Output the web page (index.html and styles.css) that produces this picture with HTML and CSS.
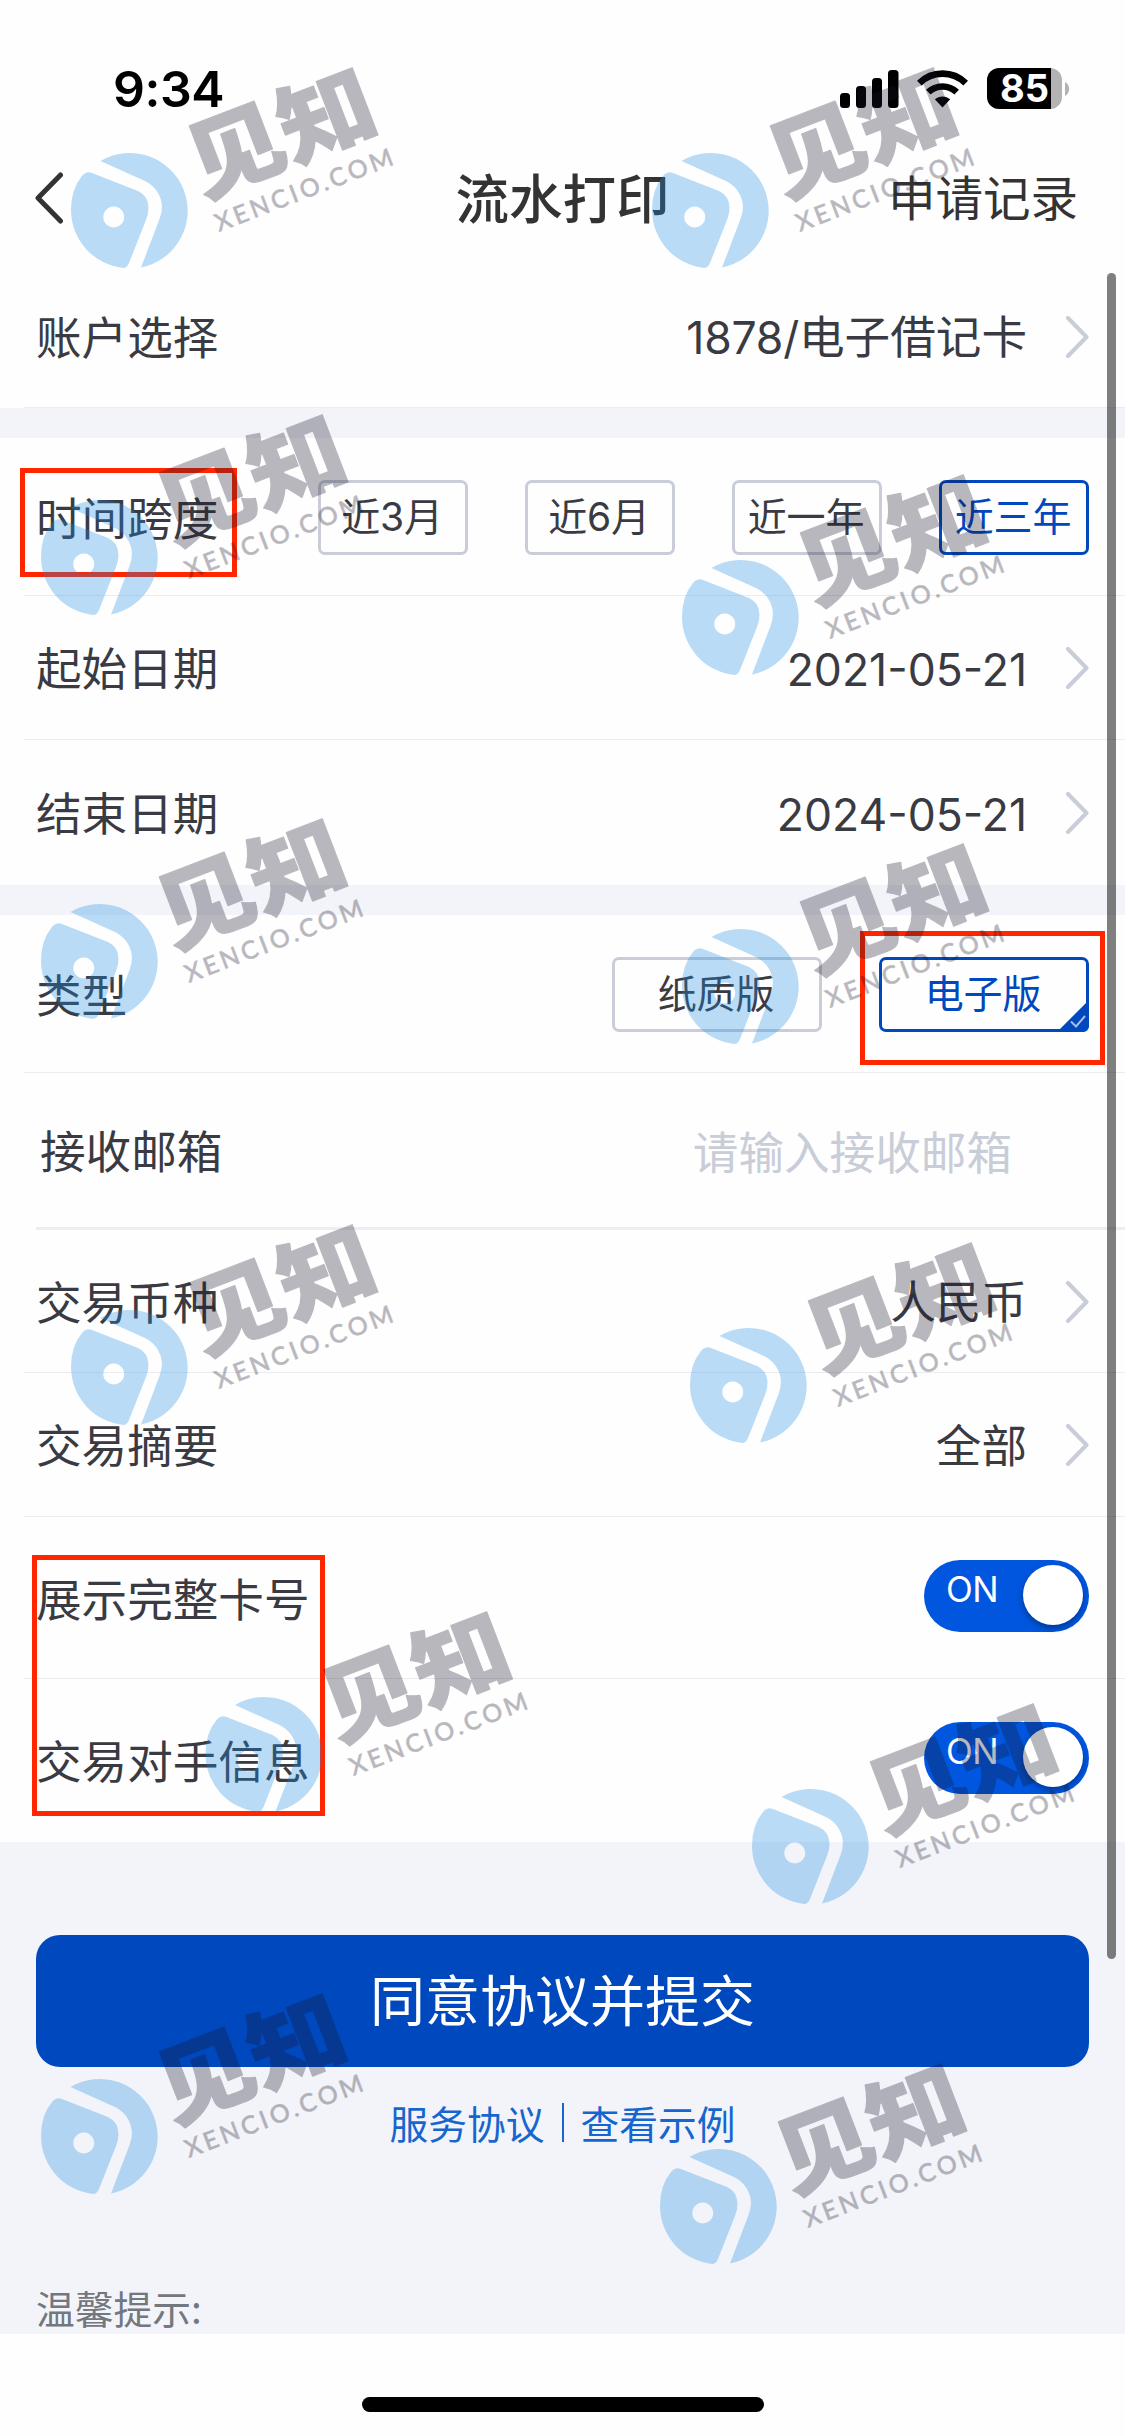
FILE: index.html
```html
<!DOCTYPE html>
<html lang="zh-CN">
<head>
<meta charset="utf-8">
<title>流水打印</title>
<link rel="stylesheet" href="styles.css">
</head>
<body>
<div class="screen">
  <header class="status">
    <span class="clock">9:34</span>
    <div class="indicators">
      <svg class="signal" width="59" height="38" viewBox="0 0 59 38"><rect x="0" y="23" width="10" height="15" rx="3.5"/><rect x="16" y="16" width="10" height="22" rx="3.5"/><rect x="32" y="8" width="10" height="30" rx="3.5"/><rect x="48" y="0" width="10.5" height="38" rx="3.5"/></svg>
      <svg class="wifi" width="51" height="38" viewBox="0 0 51 38"><g fill="none" stroke="#000" stroke-width="6.6"><path d="M2.3 13.2a33 33 0 0 1 46.4 0"/><path d="M11.3 22.2a20.5 20.5 0 0 1 28.4 0"/></g><path d="M25.5 37.5 17.8 29.3c4.400-3.900 11-3.900 15.400 0z"/></svg>
      <div class="battery"><span class="battery-text">85</span></div>
      <svg class="nub" width="5" height="14" viewBox="0 0 5 14"><path d="M0 0a8 8 0 0 1 0 14z"/></svg>
    </div>
  </header>
  <nav class="nav">
    <svg class="back" width="30" height="54" viewBox="0 0 30 54"><path d="M26.500 3 4 26 26.500 49"/></svg>
    <h1 class="title">流水打印</h1>
    <a class="records">申请记录</a>
  </nav>

  <main>
    <section>
      <div class="row"><span class="label">账户选择</span><span class="value"><span class="digits">1878/</span>电子借记卡</span><svg class="chev" viewBox="0 0 23 42"><path d="M2 2 20.500 21 2 40"/></svg></div>
    </section>
    <section class="group">
      <div class="row tall"><span class="label">时间跨度</span>
        <div class="options spans"><button class="opt">近3月</button><button class="opt">近6月</button><button class="opt">近一年</button><button class="opt on">近三年</button></div>
      </div>
      <div class="row date"><span class="label">起始日期</span><span class="value num">2021-05-21</span><svg class="chev" viewBox="0 0 23 42"><path d="M2 2 20.500 21 2 40"/></svg></div>
      <div class="row date last"><span class="label">结束日期</span><span class="value num">2024-05-21</span><svg class="chev" viewBox="0 0 23 42"><path d="M2 2 20.500 21 2 40"/></svg></div>
    </section>
    <section class="group">
      <div class="row tall"><span class="label">类型</span>
        <div class="options kinds"><button class="opt">纸质版</button><button class="opt on">电子版<svg class="corner" width="32" height="32" viewBox="0 0 32 32"><path class="tri" d="M32 0v26a6 6 0 0 1-6 6H0z"/><path class="tick" d="M14 21.500l5 5 9-10.500"/></svg></button></div>
      </div>
      <div class="row mail"><span class="label">接收邮箱</span><span class="placeholder">请输入接收邮箱</span></div>
      <div class="row"><span class="label">交易币种</span><span class="value">人民币</span><svg class="chev" viewBox="0 0 23 42"><path d="M2 2 20.500 21 2 40"/></svg></div>
      <div class="row date"><span class="label">交易摘要</span><span class="value">全部</span><svg class="chev" viewBox="0 0 23 42"><path d="M2 2 20.500 21 2 40"/></svg></div>
      <div class="row switch-row"><span class="label">展示完整卡号</span><div class="switch"><span class="switch-text">ON</span><span class="knob"></span></div></div>
      <div class="row switch-row last"><span class="label">交易对手信息</span><div class="switch"><span class="switch-text">ON</span><span class="knob"></span></div></div>
    </section>
    <section class="foot">
      <button class="submit">同意协议并提交</button>
      <div class="links"><a>服务协议</a><span class="bar"></span><a>查看示例</a></div>
      <p class="tip">温馨提示:</p>
    </section>
  </main>
  <div class="home"><span class="home-bar"></span></div>

  <span class="scroll"></span>
  <span class="mark mark-span"></span>
  <span class="mark mark-kind"></span>
  <span class="mark mark-switches"></span>

  <svg class="watermarks" width="1125" height="2436" viewBox="0 0 1125 2436">
    <defs>
      <g id="wm">
        <path class="wm-logo" fill-rule="evenodd" d="M87 172.500 Q89 172 92 173 L138 191 Q148.500 196 148.500 208 Q148.500 214 146 220 L129 263 Q127 268 123 268 A58.500 58.500 0 0 1 71 210 Q71 189 82 176 Q84 173 87 172.500Z M113.700 206.500 a10.500 10.500 0 1 0 .1 0Z"/>
        <path class="wm-logo" d="M100.500 161 A57.800 57.800 0 1 1 141 267.500 L159.500 219 Q165 205 158 193 Q154 186 146 181.500Z"/>
        <g class="wm-ink" transform="rotate(-21)">
          <text class="wm-name" transform="translate(118 257) scale(1.1 1)">见知</text>
          <text class="wm-site" x="121" y="295" textLength="189">XENCIO.COM</text>
        </g>
      </g>
    </defs>
    <use href="#wm"/>
    <use href="#wm" x="581"/>
    <use href="#wm" x="-30" y="347"/>
    <use href="#wm" x="611" y="407"/>
    <use href="#wm" x="-30" y="751"/>
    <use href="#wm" x="611" y="776"/>
    <use href="#wm" y="1157"/>
    <use href="#wm" x="619" y="1175"/>
    <use href="#wm" x="134.500" y="1544"/>
    <use href="#wm" x="681" y="1636"/>
    <use href="#wm" x="-30" y="1926"/>
    <use href="#wm" x="589" y="1996"/>
  </svg>
</div>
</body>
</html>
```
FILE: styles.css
```css
* { box-sizing: border-box; }
body { margin: 0; background: #fff; }
.screen {
  position: relative;
  width: 1125px;
  height: 2436px;
  overflow: hidden;
  background: #fefefe;
  color: #3a3b42;
  font-family: "Noto Sans CJK SC", sans-serif;
  font-size: 45.6px;
  line-height: 1;
}
h1, p { margin: 0; font-weight: 400; }
button { font: inherit; color: inherit; padding: 0; background: none; }

.status { height: 132px; display: flex; justify-content: space-between; padding: 68px 55px 0 113px; color: #000; }
.clock { font: 600 50px/42px Inter, sans-serif; letter-spacing: -0.5px; }
.indicators { display: flex; align-items: center; height: 41px; }
.wifi { margin-left: 18px; }
.battery { width: 75px; height: 41px; margin-left: 19px; border-radius: 12px; background: linear-gradient(90deg, #000 64px, #b3b3b6 64px); }
.battery-text { display: block; width: 75px; text-align: center; color: #fff; font: 700 38px/41px Inter, sans-serif; }
.nub { margin-left: 3px; fill: #b3b3b6; }

.nav { height: 133px; display: grid; grid-template-columns: 1fr auto 1fr; align-items: center; padding: 0 47px 0 34px; color: #333; }
.back { fill: none; stroke: #333; stroke-width: 5; stroke-linecap: round; stroke-linejoin: round; }
.title { font-size: 53.5px; font-weight: 500; padding: 0 0 6px 13px; }
.records { justify-self: end; padding-bottom: 5px; font-size: 47.5px; }

.row { display: flex; align-items: center; height: 143px; margin-left: 24px; padding: 1px 36px 0 12px; border-bottom: 1.5px solid #ececef; }
.row.date { height: 144px; }
.row.tall { height: 158px; padding-top: 2px; }
.row.last { border-bottom-color: transparent; }
.row.date.last { height: 145px; }
.group { border-top: 30px solid #f3f4f9; }
.label { flex: 1; padding-bottom: 2px; }
.value { padding-top: 3px; font-family: Inter, "Noto Sans CJK SC", sans-serif; }
.digits { font-size: 44.5px; letter-spacing: -0.2px; }
.num { padding-top: 5px; font-size: 44.5px; }
.chev { width: 23px; height: 42px; margin-left: 39px; fill: none; stroke: #c8cdd8; stroke-width: 4; stroke-linecap: round; stroke-linejoin: round; }

.options { display: flex; gap: 57px; }
.opt { position: relative; width: 150px; height: 75px; border: 3px solid #c8cdd8; border-radius: 7px; font: 39px/64px Inter, "Noto Sans CJK SC", sans-serif; letter-spacing: -0.2px; padding: 0 2px 2px 0; }
.kinds .opt { width: 210px; }
.opt.on { border-color: #0048be; color: #0048be; }
.corner { position: absolute; right: -3px; bottom: -3px; }
.tri { fill: #0048be; }
.tick { fill: none; stroke: #a3bde8; stroke-width: 2; }

.row.mail { height: 157px; margin-left: 36px; padding: 3px 113px 0 4px; border-bottom: 3px solid #edeef3; }
.mail .label { padding-bottom: 3px; }
.placeholder { padding-bottom: 2px; color: #c8cdd8; }

.row.switch-row { height: 162px; padding: 0 36px 4px 12px; }
.row.switch-row.last { height: 163px; }
.switch-row .label { padding: 4px 0 0; }
.switch { display: flex; justify-content: space-between; width: 165px; height: 72px; padding: 5px 6px 0 22px; border-radius: 36px; background: #0056df; }
.switch-text { color: #fff; font: 35px/49px Inter, sans-serif; letter-spacing: -0.5px; }
.knob { width: 60px; height: 60px; border-radius: 50%; background: #fff; box-shadow: 0 3px 6px rgba(0, 0, 0, .35); }

.foot { height: 492px; background: #f3f4f9; padding: 93px 36px 0; }
.submit { display: block; width: 1053px; height: 132px; border: 0; border-radius: 24px; background: #0048be; color: #fff; font-size: 55px; line-height: 120px; padding-bottom: 9px; }
.links { display: flex; justify-content: center; align-items: center; margin-top: 36px; font-size: 38.75px; color: #1766cf; }
.bar { width: 2px; height: 39px; margin: 0 17px; background: #1766cf; }
.tip { margin-top: 146px; font-size: 38.75px; color: #73777e; }

.home { height: 102px; display: flex; justify-content: center; align-items: flex-start; padding-top: 63px; }
.home-bar { width: 402px; height: 15px; border-radius: 8px; background: #000; }

.scroll { position: absolute; left: 1107px; top: 273px; width: 9px; height: 1686px; border-radius: 5px; background: rgba(0, 0, 0, .5); }
.mark { position: absolute; border: 5px solid #ff2600; }
.mark-span { left: 20px; top: 468px; width: 217px; height: 109px; }
.mark-kind { left: 860px; top: 931px; width: 245px; height: 134px; }
.mark-switches { left: 32px; top: 1555px; width: 293px; height: 261px; }

.watermarks { position: absolute; left: 0; top: 0; pointer-events: none; }
.wm-logo { fill: #198ae4; opacity: .3; }
.wm-ink { fill: #19162d; opacity: .3; }
.wm-name { font: 900 88px "Noto Sans CJK SC", sans-serif; stroke: #19162d; stroke-width: 1.2; stroke-linejoin: round; }
.wm-site { font: 500 25px Lato, sans-serif; stroke: #19162d; stroke-width: .5; }
```
